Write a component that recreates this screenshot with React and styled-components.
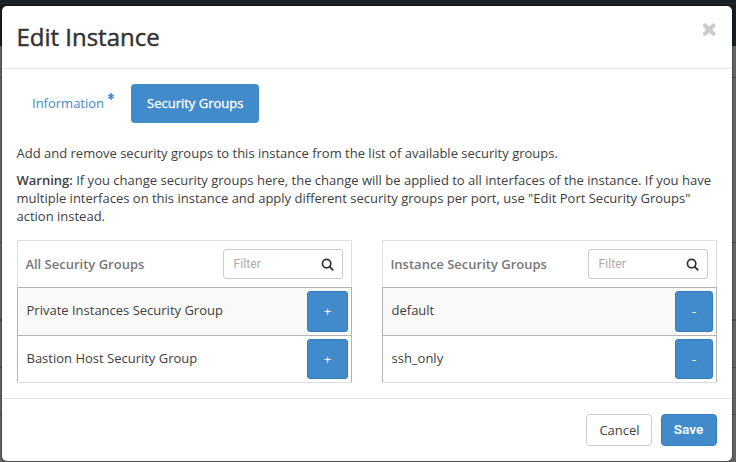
import React from "react";
import styled, { createGlobalStyle } from "styled-components";

const GlobalStyle = createGlobalStyle`
  *, *::before, *::after { box-sizing: border-box; }
  body {
    margin: 0;
    overflow: hidden;
    font: 13px/18px "Open Sans", "Noto Sans", sans-serif;
    color: #404040;
  }
  button, input { font: inherit; }
`;

const Backdrop = styled.div`
  width: 736px;
  height: 462px;
  padding: 6px 4px 1px 2px;
  background:
    linear-gradient(#4c4c4c, #4c4c4c) 0 77px / 100% 1px no-repeat,
    linear-gradient(#4c4c4c, #4c4c4c) 0 242px / 100% 1px no-repeat,
    linear-gradient(#4c4c4c, #4c4c4c) 0 319px / 100% 2px no-repeat,
    linear-gradient(#4c4c4c, #4c4c4c) 0 367px / 100% 1px no-repeat,
    linear-gradient(#4c4c4c, #4c4c4c) 0 414px / 100% 1px no-repeat,
    linear-gradient(#1c1f21 0 3px, #282b2d 3px 4px, #1a1d1f 4px 46px, #626262 46px);
`;

const Dialog = styled.section`
  display: flex;
  flex-direction: column;
  height: 455px;
  background: #fff;
  border-radius: 5px;
  box-shadow: 0 0 2px rgba(0, 0, 0, 0.75);
`;

const Header = styled.header`
  display: flex;
  justify-content: space-between;
  height: 63px;
  padding: 14px 15px 0 14.4px;
  border-bottom: 1px solid #e5e5e5;
`;

const Title = styled.h1`
  margin: 0;
  font-size: 24px;
  line-height: 34px;
  font-weight: 400;
  color: #333;
  -webkit-text-stroke: 0.45px currentColor;
`;

const CloseButton = styled.button`
  display: flex;
  width: 15px;
  height: 15px;
  margin-top: 2px;
  padding: 0;
  border: 0;
  background: none;
`;

const Body = styled.div`
  flex: 1;
  padding: 15px 15px 0;
`;

const Tabs = styled.nav`
  display: flex;
  gap: 2px;
  height: 39px;
`;

const Tab = styled.button`
  display: flex;
  width: ${(p) => (p.$active ? "128px" : "112px")};
  height: 39px;
  padding: 10px 0 0 ${(p) => (p.$active ? "16px" : "15px")};
  border: 0;
  border-radius: 4px;
  background: ${(p) => (p.$active ? "#428bca" : "transparent")};
  color: ${(p) => (p.$active ? "#fff" : "#428bca")};
  -webkit-text-stroke: ${(p) => (p.$active ? "0.3px currentColor" : "0")};
  line-height: 18px;
  white-space: nowrap;
`;

const RequiredMark = styled.svg`
  width: 6px;
  height: 7px;
  margin: -1px 0 0 4px;
`;

const Paragraph = styled.p`
  margin: ${(p) => (p.$first ? "21px 0 9px -0.5px" : "0 0 0 -0.5px")};
  white-space: nowrap;
  strong { font-weight: 600; }
`;

const Columns = styled.div`
  display: grid;
  grid-template-columns: 335px 335px;
  gap: 30px;
  margin-top: 15px;
`;

const Panel = styled.section`
  border-bottom: 1px solid #ddd;
`;

const PanelHeader = styled.div`
  display: flex;
  align-items: center;
  justify-content: space-between;
  height: 47px;
  padding: 0 8px 0 7.4px;
  border: 1px solid #ddd;
  border-bottom: 0;
  color: #777;
  font-weight: 600;
`;

const Filter = styled.label`
  display: flex;
  align-items: center;
  width: 120px;
  height: 30px;
  padding: 0 8px 0 9.5px;
  border: 1px solid #ccc;
  border-radius: 3px;
  background: #fff;
`;

const FilterInput = styled.input`
  flex: 1;
  min-width: 0;
  height: 20px;
  padding: 0;
  border: 0;
  outline: 0;
  font-family: Roboto, sans-serif;
  font-size: 12px;
  font-weight: 400;
  letter-spacing: 0.1px;
  &::placeholder { color: #aaa; opacity: 1; }
`;

const Row = styled.div`
  display: flex;
  justify-content: space-between;
  height: ${(p) => (p.$shaded ? "48px" : "47px")};
  padding: 3px 3px 0 8.5px;
  border: 1px solid #b3b3b3;
  border-bottom: 0;
  background: ${(p) => (p.$shaded ? "#f9f9f9" : "#fff")};
`;

const RowLabel = styled.span`
  margin-top: 10px;
`;

const MoveButton = styled.button`
  width: ${(p) => (p.$remove ? "38px" : "41px")};
  height: ${(p) => (p.$short ? "40px" : "41px")};
  padding: 0 0 ${(p) => (p.$short ? "1px" : "2px")};
  border: 1px solid #357ebd;
  border-radius: 3px;
  background: #428bca;
  color: #fff;
`;

const Footer = styled.footer`
  display: flex;
  justify-content: flex-end;
  gap: 9px;
  height: 63px;
  padding: 15px 15px 0;
  border-top: 1px solid #e5e5e5;
`;

const ActionButton = styled.button`
  width: ${(p) => (p.$primary ? "56px" : "66px")};
  height: 32px;
  padding: ${(p) => (p.$primary ? "0 1px 3px 0" : "0 0 0 1px")};
  border: 1px solid ${(p) => (p.$primary ? "#357ebd" : "#ccc")};
  border-radius: 4px;
  background: ${(p) => (p.$primary ? "#428bca" : "#fff")};
  color: ${(p) => (p.$primary ? "#fff" : "#404040")};
  font-family: ${(p) => (p.$primary ? "Roboto" : '"Open Sans"')}, sans-serif;
  font-size: ${(p) => (p.$primary ? "13.5px" : "13px")};
  font-weight: ${(p) => (p.$primary ? 600 : 400)};
`;

function SearchIcon() {
  return (
    <svg width="13" height="13" viewBox="0 0 13 13" fill="none" stroke="#333">
      <circle cx="5.6" cy="5.6" r="4.2" strokeWidth="1.7" />
      <path d="M8.8 8.8 11.8 11.8" strokeWidth="1.9" strokeLinecap="round" />
    </svg>
  );
}

function GroupPanel({ title, groups, remove }) {
  return (
    <Panel>
      <PanelHeader>
        <span>{title}</span>
        <Filter>
          <FilterInput placeholder="Filter" />
          <SearchIcon />
        </Filter>
      </PanelHeader>
      {groups.map((name, i) => (
        <Row key={name} $shaded={i % 2 === 0}>
          <RowLabel>{name}</RowLabel>
          <MoveButton $remove={remove} $short={i % 2 === 1}>{remove ? "-" : "+"}</MoveButton>
        </Row>
      ))}
    </Panel>
  );
}

export default function App() {
  return (
    <>
      <GlobalStyle />
      <Backdrop>
        <Dialog>
          <Header>
            <Title>Edit Instance</Title>
            <CloseButton aria-label="Close">
              <svg width="15" height="15" viewBox="0 0 15 15" stroke="#ccc" strokeWidth="4.2" strokeLinecap="round">
                <path d="M3 3.4 11.4 11.8M11.4 3.4 3 11.8" />
              </svg>
            </CloseButton>
          </Header>
          <Body>
            <Tabs>
              <Tab>
                Information
                <RequiredMark viewBox="0 0 6 7" stroke="#428bca" strokeWidth="1.8">
                  <path d="M3 .3V6.7M.3 1.9 5.7 5.1M5.7 1.9.3 5.1" />
                </RequiredMark>
              </Tab>
              <Tab $active>Security Groups</Tab>
            </Tabs>
            <Paragraph $first>
              Add and remove security groups to this instance from the list of available security groups.
            </Paragraph>
            <Paragraph>
              <strong>Warning:</strong> If you change security groups here, the change will be applied to all interfaces of the instance. If you have
              <br />
              multiple interfaces on this instance and apply different security groups per port, use "Edit Port Security Groups"
              <br />
              action instead.
            </Paragraph>
            <Columns>
              <GroupPanel
                title="All Security Groups"
                groups={["Private Instances Security Group", "Bastion Host Security Group"]}
              />
              <GroupPanel title="Instance Security Groups" groups={["default", "ssh_only"]} remove />
            </Columns>
          </Body>
          <Footer>
            <ActionButton>Cancel</ActionButton>
            <ActionButton $primary>Save</ActionButton>
          </Footer>
        </Dialog>
      </Backdrop>
    </>
  );
}
